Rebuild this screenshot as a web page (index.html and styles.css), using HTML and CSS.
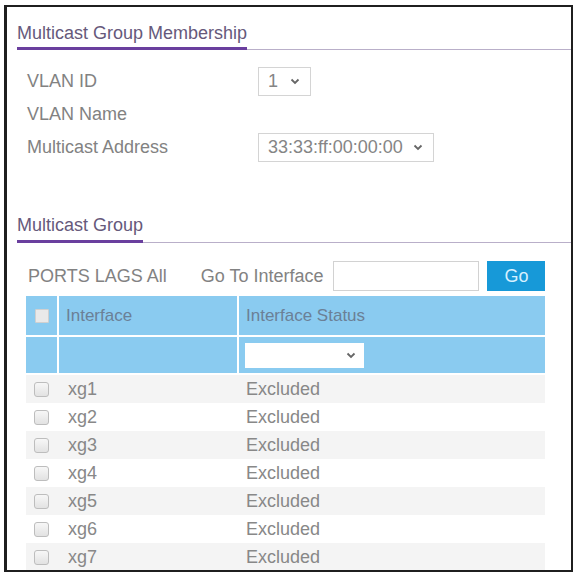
FILE: index.html
```html
<!DOCTYPE html>
<html lang="en">
<head>
    <meta charset="UTF-8">
    <title>Multicast Group Membership</title>
    <link rel="stylesheet" href="styles.css">
</head>
<body>
    <div class="frame">
        <div class="section-head">
            <span class="section-title">Multicast Group Membership</span>
        </div>

        <div class="form">
            <div class="form-label">VLAN ID</div>
            <div class="form-value">
                <div class="select select-small">
                    <span>1</span>
                    <svg class="chevron" width="10" height="7" viewBox="0 0 10 7"><polyline points="1.5,1.5 5,5 8.5,1.5"/></svg>
                </div>
            </div>
            <div class="form-label">VLAN Name</div>
            <div class="form-value"></div>
            <div class="form-label">Multicast Address</div>
            <div class="form-value">
                <div class="select select-wide">
                    <span>33:33:ff:00:00:00</span>
                    <svg class="chevron" width="10" height="7" viewBox="0 0 10 7"><polyline points="1.5,1.5 5,5 8.5,1.5"/></svg>
                </div>
            </div>
        </div>

        <div class="section-head second">
            <span class="section-title">Multicast Group</span>
        </div>

        <div class="toolbar">
            <span class="filters">PORTS LAGS All</span>
            <span class="goto-label">Go To Interface</span>
            <div class="goto-input"></div>
            <div class="go-btn">Go</div>
        </div>

        <div class="grid">
            <div class="grid-head">
                <div class="cell cell-check"><span class="checkbox head-check"></span></div>
                <div class="cell">Interface</div>
                <div class="cell">Interface Status</div>
            </div>
            <div class="grid-head filter-row">
                <div class="cell"></div>
                <div class="cell"></div>
                <div class="cell">
                    <div class="select select-filter">
                        <span></span>
                        <svg class="chevron" width="10" height="7" viewBox="0 0 10 7"><polyline points="1.5,1.5 5,5 8.5,1.5"/></svg>
                    </div>
                </div>
            </div>
            <div id="rows"></div>
        </div>
    </div>

    <script>
        const rows = document.getElementById('rows');
        const ports = ['xg1', 'xg2', 'xg3', 'xg4', 'xg5', 'xg6', 'xg7'];

        rows.innerHTML = ports.map(port => `
            <div class="grid-row">
                <div class="cell cell-check"><span class="checkbox"></span></div>
                <div class="cell cell-name">${port}</div>
                <div class="cell">Excluded</div>
            </div>
        `).join('');
    </script>
</body>
</html>
```

FILE: styles.css
```css
* {
    margin: 0;
    padding: 0;
    box-sizing: border-box;
}

body {
    font-family: "Liberation Sans", Arial, sans-serif;
    font-size: 18px;
    color: #828282;
    background: #fff;
    padding: 5px 3px 1px 4px;
}

.frame {
    height: 567px;
    border: 2px solid #1f1f1f;
    border-left-width: 3px;
    overflow: hidden;
}

/* section headings */

.section-head {
    display: flex;
    margin: 15px 0 0 10px;
    border-bottom: 1px solid #b9afc9;
}

.section-head.second {
    margin-top: 50px;
}

.section-title {
    line-height: 22px;
    padding-bottom: 3px;
    margin-bottom: -1px;
    color: #66597b;
    border-bottom: 3px solid #6a3f9e;
}

.section-head.second .section-title {
    padding-bottom: 4px;
}

/* form */

.form {
    display: grid;
    grid-template-columns: 231px auto;
    grid-auto-rows: 33px;
    align-items: center;
    margin: 15px 0 0 20px;
}

.select {
    display: flex;
    align-items: center;
    justify-content: space-between;
    height: 29px;
    padding: 0 10px 0 9px;
    border: 1px solid #d4d4d4;
    background: #fff;
    color: #858585;
}

.select-small {
    width: 53px;
}

.select-wide {
    width: 176px;
}

.chevron {
    fill: none;
    stroke: #666;
    stroke-width: 1.8;
}

/* toolbar */

.toolbar {
    display: flex;
    align-items: center;
    height: 30px;
    margin: 18px 0 0 21px;
}

.filters {
    margin-right: 34px;
}

.goto-label {
    margin-right: 10px;
}

.goto-input {
    width: 146px;
    height: 30px;
    border: 1px solid #d2d2d2;
    margin-right: 8px;
}

.go-btn {
    width: 58px;
    height: 30px;
    line-height: 30px;
    text-align: center;
    background: #1799d8;
    color: #d6f0ff;
}

/* table */

.grid {
    margin: 5px 26px 0 19px;
}

.grid-head,
.grid-row {
    display: grid;
    grid-template-columns: 31px 178px 1fr;
    column-gap: 2px;
}

.grid-head {
    height: 39px;
    margin-bottom: 2px;
}

.grid-head .cell {
    display: flex;
    align-items: center;
    padding-left: 7px;
    background: #8acbf0;
    color: #6b8096;
    font-size: 17px;
}

.grid-head.filter-row {
    height: 36px;
}

.grid-head .cell-check {
    justify-content: center;
    padding-left: 0;
}

.select-filter {
    width: 119px;
    height: 25px;
    margin-left: -1px;
    border: none;
    padding-right: 8px;
}

.grid-row {
    height: 28px;
    align-items: center;
}

.grid-row:nth-child(odd) {
    background: #f4f4f4;
}

.grid-row .cell {
    line-height: 20px;
    padding-left: 7px;
    color: #888;
}

.grid-row .cell-name {
    padding-left: 9px;
}

.cell-check {
    display: flex;
    justify-content: center;
}

.grid-row .cell-check {
    padding-left: 0;
}

.checkbox {
    display: block;
    width: 15px;
    height: 15px;
    border: 1px solid #bdbdbd;
    border-radius: 3px;
    background: linear-gradient(#f7f7f7, #e2e2e2);
}

.head-check {
    width: 14px;
    height: 14px;
    border-radius: 1px;
    border-color: #d0d0d0;
    background: #e9e9e9;
}
```
